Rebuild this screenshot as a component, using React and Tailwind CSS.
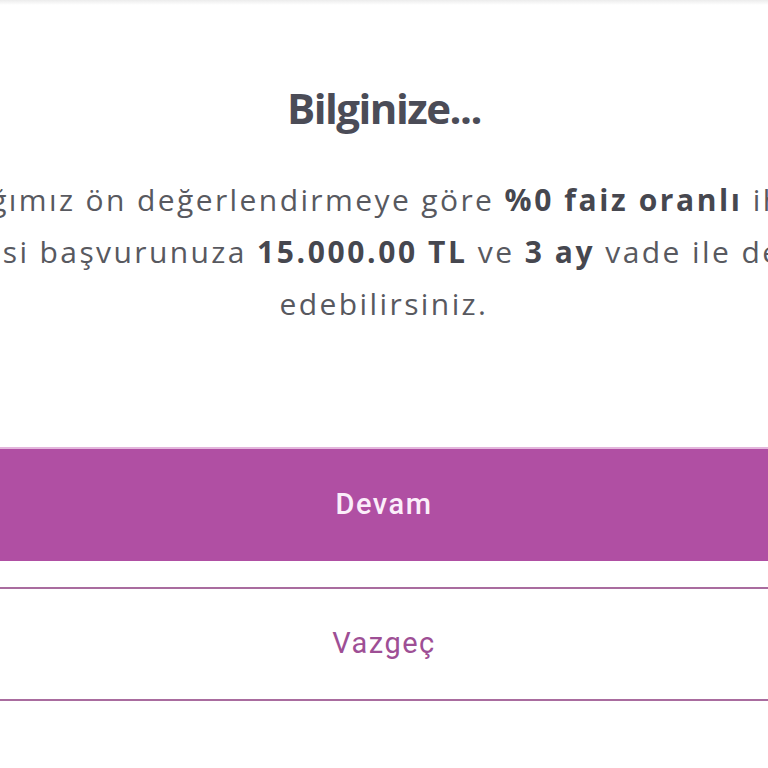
import React from 'react';

const App = () => {
    return (
        <div className="relative w-full h-[768px] overflow-hidden bg-white" style={{ fontFamily: '"Open Sans", sans-serif' }}>
            {/* top edge shade */}
            <div className="absolute top-0 left-0 right-0 h-[5px] bg-gradient-to-b from-[#ececec] to-white" />

            <div className="flex justify-center pt-[84px]">
                <div className="w-[1400px] shrink-0 flex flex-col items-center">
                    <h1 className="text-[42px] leading-[48px] font-bold tracking-[-1.5px] text-[#4b4c57]">Bilginize...</h1>

                    <p className="mt-[42px] text-[30px] leading-[52px] text-[#58595f] text-center tracking-[2.4px]">
                        Yaptığımız ön değerlendirmeye göre <b className="font-bold text-[#46474f] tracking-[2.6px]">%0 faiz oranlı</b> ihtiyaç
                        <br />
                        kredisi başvurunuza <b className="font-bold text-[#46474f] tracking-[2.6px]">15.000.00 TL</b> ve <b className="font-bold text-[#46474f] tracking-[2.6px]">3 ay</b> vade ile devam
                        <br />
                        edebilirsiniz.
                    </p>

                    <button className="mt-[117px] w-[1400px] h-[114px] bg-[#b04fa3] border-t-2 border-[#e3b6dc] text-[#fbeefa] text-[29px] font-medium tracking-[1.5px]" style={{ fontFamily: 'Roboto, sans-serif' }}>
                        Devam
                    </button>
                    <button className="mt-[26px] w-[1400px] h-[114px] bg-white border-y-2 border-[#a96c9f] text-[#9e4f95] text-[29px] tracking-[1.5px]" style={{ fontFamily: 'Roboto, sans-serif' }}>
                        Vazgeç
                    </button>
                </div>
            </div>
        </div>
    );
};

export default App;
